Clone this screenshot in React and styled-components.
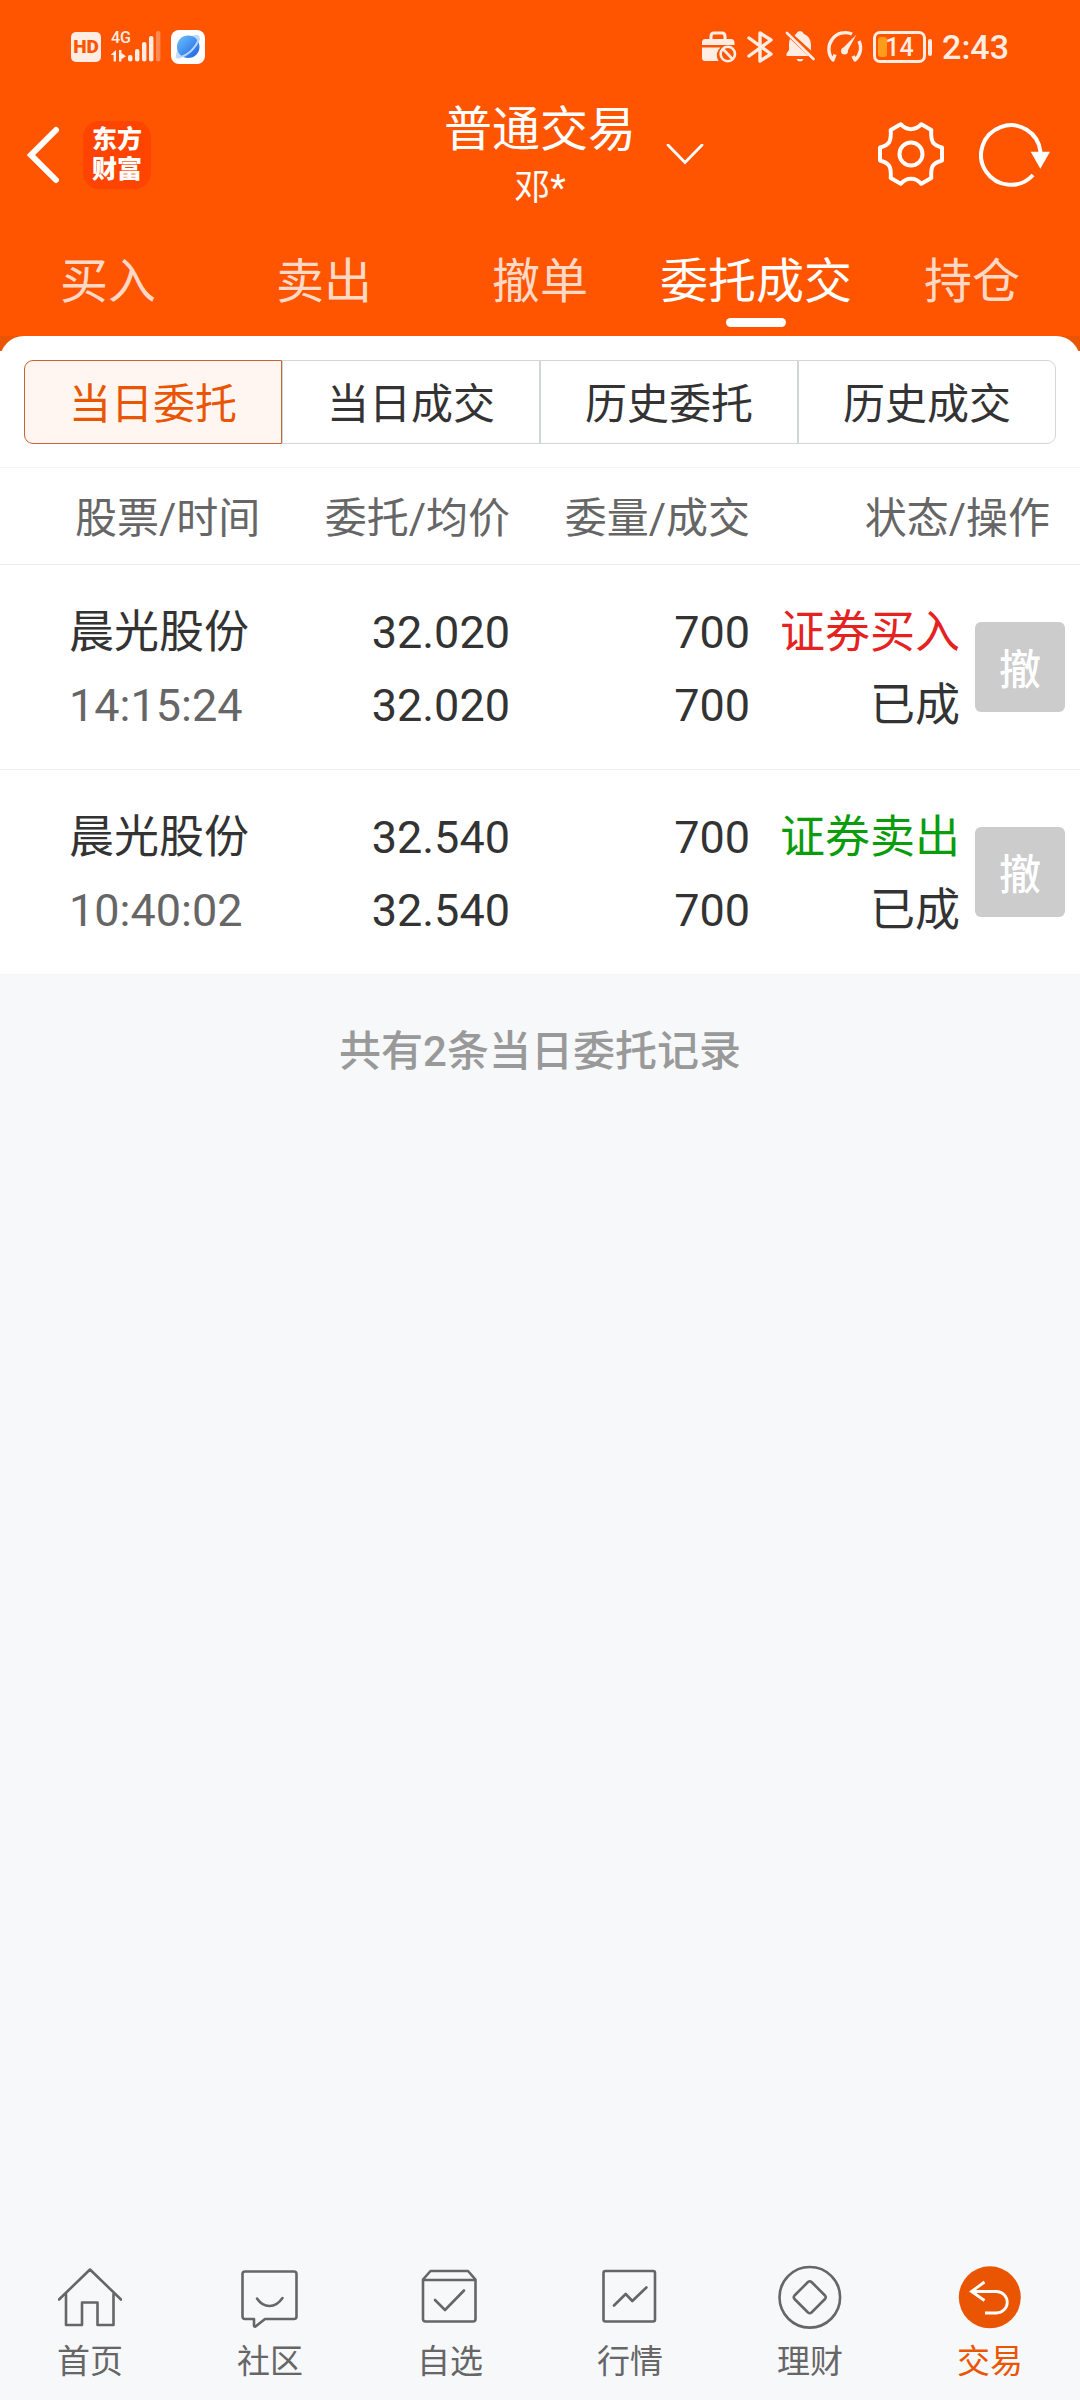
import { useState } from "react";
import React from "react";
import styled, { createGlobalStyle } from "styled-components";

const tabs = ["买入", "卖出", "撤单", "委托成交", "持仓"];
const segments = ["当日委托", "当日成交", "历史委托", "历史成交"];
const orders = [
  {
    name: "晨光股份",
    time: "14:15:24",
    price: "32.020",
    average: "32.020",
    amount: 700,
    filled: 700,
    side: "buy",
    action: "证券买入",
    status: "已成",
  },
  {
    name: "晨光股份",
    time: "10:40:02",
    price: "32.540",
    average: "32.540",
    amount: 700,
    filled: 700,
    side: "sell",
    action: "证券卖出",
    status: "已成",
  },
];

const SignalIcon = () => (
  <svg width="50" height="34" viewBox="0 0 50 34" fill="#ffece2">
    <path d="M0 24.5 5 20v11.5H2.6V25H0zM8 20h2.4v3l4.6 3.2-4.6 3v2.3H8z" />
    <rect x="17" y="25" width="4.4" height="6.5" rx="2" />
    <rect x="24" y="19" width="4.4" height="12.5" rx="2" />
    <rect x="31" y="12" width="4.4" height="19.5" rx="2" />
    <rect x="38" y="6" width="4.4" height="25.5" rx="2" />
    <rect x="45" y="1" width="4.4" height="30.5" rx="2" opacity="0.35" />
  </svg>
);

const BrowserIcon = () => (
  <svg width="34" height="34" viewBox="0 0 34 34">
    <defs>
      <linearGradient id="globe" x1="0" y1="0" x2="1" y2="1">
        <stop offset="0" stopColor="#6cc4fb" />
        <stop offset="1" stopColor="#1d5fe6" />
      </linearGradient>
    </defs>
    <rect width="34" height="34" rx="8" fill="#fff" />
    <path d="M19 6.500c5-2 9-2 9.500 0 .5 4-1 9-3 12L8 28.500c-3 .5-3.500-1-3-3 0-3 1-5 3-7z" fill="#c3dafc" />
    <circle cx="17.200" cy="16.700" r="11.300" fill="url(#globe)" />
    <path d="M28 8c-1 5-4 9-8 13-4 3.500-8 6-12 6" fill="none" stroke="#b5d6fd" strokeWidth="2" />
  </svg>
);

const BriefcaseIcon = () => (
  <svg width="36" height="34" viewBox="0 0 36 34">
    <path d="M10 10V6.500Q10 3 13 3h8q3 0 3 3.500V10" fill="none" stroke="#ffece2" strokeWidth="3" />
    <path
      d="M4 9h26q3.500 0 3.500 3.500V15H1v-2.500Q1 9 4 9zM1 17.500h18.500A10 10 0 0 0 17.500 31H4q-3 0-3-3z"
      fill="#ffece2"
    />
    <circle cx="26.800" cy="24" r="7.200" fill="none" stroke="#ffece2" strokeWidth="2.600" />
    <path d="m22 19 9.500 10" stroke="#ffece2" strokeWidth="2.600" />
  </svg>
);

const BluetoothIcon = () => (
  <svg width="28" height="34" viewBox="0 0 28 34">
    <path
      d="m2 8 22 16-11 7V3l11 7L2 26"
      fill="none"
      stroke="#ffece2"
      strokeWidth="3.400"
      strokeLinecap="round"
      strokeLinejoin="round"
    />
  </svg>
);

const BellOffIcon = () => (
  <svg width="30" height="34" viewBox="0 0 30 34">
    <path
      d="M9.500 5.500 11 4q1.500-3 4-3t4 3q7 3 7 11v5.500zM5 8.800 23.500 26H1.500v-2.500L4 20v-6q0-3 1-5.200zM11.500 29h7q-1 2.500-3.500 2.500T11.500 29z"
      fill="#ffece2"
    />
    <path d="m2 3 26.500 26" stroke="#ffece2" strokeWidth="2.600" strokeLinecap="round" />
  </svg>
);

const GaugeIcon = () => (
  <svg width="38" height="34" viewBox="0 0 38 34" fill="none" stroke="#ffece2" strokeWidth="3.400">
    <path d="M27 4A16.500 16.500 0 0 0 8 30l2-5.500M34 11a16 16 0 0 1-4 19l-2-4" strokeLinejoin="round" />
    <path d="m17 19 14.500-14.500L22 22z" fill="#ffece2" stroke="none" />
    <circle cx="19.500" cy="21" r="3.500" fill="#ffece2" stroke="none" />
  </svg>
);

const BackIcon = () => (
  <svg width="34" height="60" viewBox="0 0 34 60">
    <path d="M29 5 4 30l25 25" fill="none" stroke="#fff" strokeWidth="6" strokeLinecap="round" />
  </svg>
);

const DownIcon = () => (
  <svg width="38" height="22" viewBox="0 2 38 22">
    <path d="m2 3 17 17.500L36 3" fill="none" stroke="#fff" strokeWidth="2.800" strokeLinecap="round" />
  </svg>
);

const GearIcon = () => (
  <svg width="68" height="66" viewBox="-34 -32 68 66" fill="none" stroke="#fff" strokeWidth="4">
    <path
      d="M-10.300-29.800C-6-25-3-24.800 0-24.800s6-.2 10.300-5L20.300-24C19.500-12 22-9 31-6.500v13C22 9 19.500 12 20.300 24l-10 5.800C6 25 3 24.800 0 24.800s-6 .2-10.300 5L-20.300 24C-19.500 12-22 9-31 6.500v-13C-22-9-19.500-12-20.300-24z"
      strokeLinejoin="round"
    />
    <circle r="11.500" />
  </svg>
);

const RefreshIcon = () => (
  <svg width="74" height="66" viewBox="0 0 74 66">
    <path d="M61.500 30A29.800 29.800 0 1 0 54 53" fill="none" stroke="#fff" strokeWidth="4" />
    <path d="M51.700 29.700H71l-9.700 17z" fill="#fff" />
  </svg>
);

const NavIcon = ({ children }) => (
  <svg
    width="64"
    height="64"
    viewBox="0 0 64 64"
    fill="none"
    stroke="#666"
    strokeWidth="2.600"
    strokeLinecap="round"
    strokeLinejoin="round"
  >
    {children}
  </svg>
);

const navItems = [
  {
    label: "首页",
    icon: <path d="M1 34.500 32 4.500l31 30M8 29v31h16V37.500h15.500V60h16V29" />,
  },
  {
    label: "社区",
    icon: (
      <>
        <path d="M7 6.500h49q2.500 0 2.500 2.500v42.500q0 2.500-2.500 2.500H27l-9.500 7.500q-1.500.5-1.500-1V54H7q-2.500 0-2.500-2.500V9Q4.500 6.500 7 6.500z" />
        <path d="M19 33.500q5 7.500 12.500 7.500t13-8" />
      </>
    ),
  },
  {
    label: "自选",
    icon: (
      <>
        <path d="M5 14.500 12.500 6H50l7.500 8.500v39.500q0 2.500-2.500 2.500H7.500Q5 56.500 5 54zM5 15h52" />
        <path d="M17 35 27 45l19-19.500" />
      </>
    ),
  },
  {
    label: "行情",
    icon: (
      <>
        <rect x="5.500" y="6" width="51.500" height="50.500" rx="2" />
        <path d="m16 40.500 11.700-11.500 6.600 7L48.400 22.500" />
      </>
    ),
  },
  {
    label: "理财",
    icon: (
      <>
        <circle cx="31.800" cy="32.300" r="30.300" />
        <path d="m30 17-13.500 13.500q-1.500 1.700 0 3.500L30 47.500q1.800 1.500 3.500 0L47 34q1.500-1.800 0-3.500L33.500 17q-1.700-1.500-3.500 0z" />
      </>
    ),
  },
  {
    label: "交易",
    active: true,
    icon: (
      <>
        <circle cx="31.800" cy="32.300" r="31" fill="#ea5504" stroke="none" />
        <path
          d="M26.500 17 13.500 26.500l13 9M14 26.500h24.500a10.700 10.700 0 0 1 0 21.500H27"
          stroke="#fff"
          strokeWidth="2.800"
          strokeLinecap="butt"
          strokeLinejoin="miter"
        />
      </>
    ),
  },
];

const App = () => {
  const [tab, setTab] = useState("委托成交");
  const [segment, setSegment] = useState("当日委托");

  return (
    <Page>
      <GlobalStyle />
      <Header>
        <StatusBar>
          <StatusGroup>
            <HdBadge>HD</HdBadge>
            <Network>
              <NetworkLabel>4G</NetworkLabel>
              <SignalIcon />
            </Network>
            <BrowserIcon />
          </StatusGroup>
          <StatusGroup>
            <BriefcaseIcon />
            <BluetoothIcon />
            <BellOffIcon />
            <GaugeIcon />
            <Battery>
              <BatteryBody>
                <BatteryLevel />
                14
              </BatteryBody>
              <BatteryTip />
            </Battery>
            <Clock>2:43</Clock>
          </StatusGroup>
        </StatusBar>
        <TitleBar>
          <TitleSide>
            <IconButton aria-label="返回">
              <BackIcon />
            </IconButton>
            <Logo>
              东方
              <br />
              财富
            </Logo>
          </TitleSide>
          <Account>
            <span />
            <AccountText>
              <Title>普通交易</Title>
              <UserName>邓*</UserName>
            </AccountText>
            <IconButton aria-label="切换账户">
              <DownIcon />
            </IconButton>
          </Account>
          <TitleSide $end>
            <IconButton aria-label="设置">
              <GearIcon />
            </IconButton>
            <IconButton aria-label="刷新">
              <RefreshIcon />
            </IconButton>
          </TitleSide>
        </TitleBar>
        <Tabs>
          {tabs.map((item) => (
            <Tab key={item} $active={item === tab} onClick={() => setTab(item)}>
              {item}
            </Tab>
          ))}
        </Tabs>
      </Header>

      <CardBack>
        <Card>
          <Segments>
            {segments.map((item) => (
              <Segment key={item} $active={item === segment} onClick={() => setSegment(item)}>
                {item}
              </Segment>
            ))}
          </Segments>
          <Table>
            <colgroup>
              <col />
              <Col $width={240} />
              <Col $width={240} />
              <Col $width={210} />
              <Col $width={120} />
            </colgroup>
            <thead>
              <tr>
                <HeadCell $first>股票/时间</HeadCell>
                <HeadCell>委托/均价</HeadCell>
                <HeadCell>委量/成交</HeadCell>
                <HeadCell $last colSpan={2}>
                  状态/操作
                </HeadCell>
              </tr>
            </thead>
            <tbody>
              {orders.map((order) => (
                <Row key={order.time}>
                  <Cell $first>
                    <Line>{order.name}</Line>
                    <Line $muted>{order.time}</Line>
                  </Cell>
                  <Cell>
                    <Line>{order.price}</Line>
                    <Line>{order.average}</Line>
                  </Cell>
                  <Cell>
                    <Line>{order.amount}</Line>
                    <Line>{order.filled}</Line>
                  </Cell>
                  <Cell>
                    <Line $side={order.side}>{order.action}</Line>
                    <Line>{order.status}</Line>
                  </Cell>
                  <ActionCell>
                    <CancelButton disabled>撤</CancelButton>
                  </ActionCell>
                </Row>
              ))}
            </tbody>
          </Table>
        </Card>
      </CardBack>
      <Summary>共有2条当日委托记录</Summary>

      <Nav>
        {navItems.map((item) => (
          <NavLink key={item.label} href="#" $active={item.active}>
            <NavIcon>{item.icon}</NavIcon>
            {item.label}
          </NavLink>
        ))}
      </Nav>
    </Page>
  );
};

export default App;

const GlobalStyle = createGlobalStyle`
  * {
    box-sizing: border-box;
  }
  body {
    margin: 0;
    background-color: #f7f8fa;
    font-family: Roboto, "Noto Sans CJK SC", sans-serif;
    color: #333;
  }
  button {
    font-family: inherit;
    border: none;
    padding: 0;
    background: none;
    cursor: pointer;
  }
  svg {
    display: block;
    flex-shrink: 0;
  }
`;
const Page = styled.div`
  display: flex;
  flex-direction: column;
  min-height: 100vh;
`;
const Header = styled.header`
  background-color: #ff5500;
  color: white;
`;
const StatusBar = styled.div`
  display: flex;
  align-items: center;
  justify-content: space-between;
  height: 94px;
  padding: 0 71px;
  color: #ffece2;
`;
const StatusGroup = styled.div`
  display: flex;
  align-items: center;
  gap: 10px;
`;
const HdBadge = styled.span`
  width: 30px;
  border-radius: 5px;
  background-color: #ffece2;
  color: #ff5500;
  font-size: 19px;
  font-weight: 900;
  line-height: 30px;
  text-align: center;
`;
const Network = styled.div`
  position: relative;
`;
const NetworkLabel = styled.span`
  position: absolute;
  top: 0;
  left: 0;
  font-size: 16px;
  font-weight: 500;
  line-height: 16px;
`;
const Battery = styled.div`
  display: flex;
  align-items: center;
  gap: 2px;
`;
const BatteryBody = styled.div`
  position: relative;
  isolation: isolate;
  width: 53px;
  height: 32px;
  border: 3px solid #ffece2;
  border-radius: 7px;
  font-size: 25px;
  font-weight: 500;
  line-height: 27px;
  text-align: center;
`;
const BatteryLevel = styled.span`
  position: absolute;
  top: 3px;
  left: 2px;
  z-index: -1;
  width: 9px;
  height: 20px;
  border-radius: 3px;
  background-color: #ff9c1a;
`;
const BatteryTip = styled.span`
  width: 4px;
  height: 17px;
  border-radius: 2px;
  background-color: #ffece2;
`;
const Clock = styled.span`
  font-size: 34px;
  font-weight: 500;
  line-height: 40px;
`;
const TitleBar = styled.div`
  display: grid;
  grid-template-columns: 1fr auto 1fr;
  align-items: center;
  height: 122px;
  padding: 0 27px;
`;
const TitleSide = styled.div`
  display: flex;
  align-items: center;
  justify-content: ${(props) => (props.$end ? "flex-end" : "flex-start")};
  gap: ${(props) => (props.$end ? "34px" : "22px")};
`;
const IconButton = styled.button`
  display: flex;
`;
const Logo = styled.div`
  width: 68px;
  padding: 4px 0;
  border-radius: 16px;
  background-color: #ff4400;
  font-size: 25px;
  font-weight: 900;
  line-height: 30px;
  text-align: center;
`;
const Account = styled.div`
  display: grid;
  grid-template-columns: 38px auto 38px;
  align-items: center;
  gap: 30px;
`;
const AccountText = styled.div`
  padding-top: 6px;
  text-align: center;
`;
const Title = styled.h1`
  margin: 0;
  font-size: 48px;
  font-weight: normal;
  line-height: 60px;
`;
const UserName = styled.div`
  font-size: 36px;
  line-height: 56px;
`;
const Tabs = styled.nav`
  display: grid;
  grid-template-columns: repeat(5, 1fr);
  height: 120px;
`;
const Tab = styled.button`
  display: flex;
  flex-direction: column;
  align-items: center;
  justify-content: flex-end;
  gap: 4px;
  padding-bottom: 9px;
  color: ${(props) => (props.$active ? "white" : "#ffd9c6")};
  font-size: 48px;
  line-height: 64px;
  white-space: nowrap;
  &::after {
    content: "";
    width: 60px;
    height: 9px;
    border-radius: 5px;
    background-color: ${(props) => (props.$active ? "white" : "transparent")};
  }
`;
const CardBack = styled.div`
  background: linear-gradient(#ea5504 15px, white 15px);
`;
const Card = styled.main`
  border-radius: 24px 24px 0 0;
  background-color: white;
`;
const Segments = styled.div`
  display: flex;
  padding: 24px 24px 23px;
`;
const Segment = styled.button`
  flex: 1;
  height: 84px;
  padding-top: 5px;
  border: 1px solid ${(props) => (props.$active ? "#c8642f" : "#d3d6d6")};
  background-color: ${(props) => (props.$active ? "#fff5f1" : "white")};
  color: ${(props) => (props.$active ? "#ea5504" : "#333")};
  font-size: 42px;
  line-height: 60px;
  &:first-child {
    border-radius: 9px 0 0 9px;
  }
  &:last-child {
    border-radius: 0 9px 9px 0;
  }
`;
const Table = styled.table`
  width: 100%;
  border-top: 1px solid #f5f5f5;
  border-spacing: 0;
  table-layout: fixed;
`;
const Col = styled.col`
  width: ${(props) => props.$width}px;
`;
const HeadCell = styled.th`
  height: 97px;
  padding: 5px ${(props) => (props.$last ? "30px" : "0")} 0
    ${(props) => (props.$first ? "75px" : "0")};
  border-bottom: 1px solid #eee;
  color: #666;
  font-size: 42px;
  font-weight: normal;
  line-height: 60px;
  text-align: ${(props) => (props.$first ? "left" : "right")};
  white-space: nowrap;
`;
const Cell = styled.td`
  height: 205px;
  padding: 4px 0 0 ${(props) => (props.$first ? "69px" : "0")};
  border-bottom: 1px solid #eee;
  text-align: ${(props) => (props.$first ? "left" : "right")};
  white-space: nowrap;
`;
const ActionCell = styled(Cell)`
  padding: 0 15px;
`;
const Row = styled.tr`
  &:last-child ${Cell} {
    height: 204px;
    border-bottom: none;
  }
`;
const sideColors = { buy: "#e52222", sell: "#0a9c0a" };
const Line = styled.div`
  color: ${(props) => (props.$muted ? "#666" : sideColors[props.$side] || "#333")};
  font-size: 45px;
  line-height: 73px;
`;
const CancelButton = styled.button`
  display: block;
  width: 90px;
  height: 90px;
  padding-bottom: 2px;
  border-radius: 6px;
  background-color: #ccc;
  color: white;
  font-size: 42px;
  font-weight: 500;
`;
const Summary = styled.p`
  margin: 0;
  padding: 48px 0;
  color: #999;
  font-size: 42px;
  font-weight: 500;
  line-height: 60px;
  text-align: center;
`;
const Nav = styled.nav`
  display: grid;
  grid-template-columns: repeat(6, 1fr);
  margin-top: auto;
  padding-bottom: 16px;
`;
const NavLink = styled.a`
  display: flex;
  flex-direction: column;
  align-items: center;
  gap: 11px;
  color: ${(props) => (props.$active ? "#ea5504" : "#666")};
  font-size: 33px;
  line-height: 44px;
  text-decoration: none;
`;
